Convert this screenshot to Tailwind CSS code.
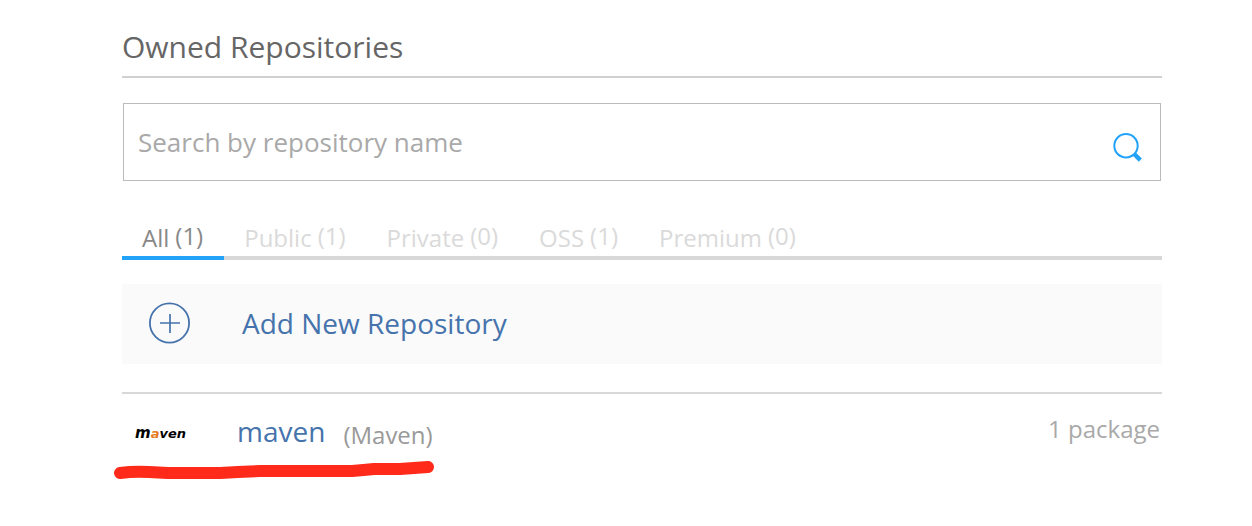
<!DOCTYPE html>
<html lang="en">
<head>
<meta charset="utf-8">
<meta name="viewport" content="width=device-width, initial-scale=1">
<title>Owned Repositories</title>
<script src="https://cdn.jsdelivr.net/npm/@tailwindcss/browser@4"></script>
</head>
<body class="bg-white font-['Open_Sans',sans-serif]">
<main class="pt-[26px] pr-[90px] pb-8 pl-[122px]">
  <h1 class="border-b-2 border-[#d0d0d0] pb-2 text-[30px] leading-[42px] text-[#666]">Owned Repositories</h1>

  <form class="relative mx-px mt-[25px]" role="search">
    <input type="text" aria-label="Search by repository name" placeholder="Search by repository name" class="block h-[78px] w-full border border-[#bbb] bg-white pr-16 pl-[14px] text-[26px] text-[#666] outline-none placeholder:text-[#a9a9a9]">
    <button type="button" aria-label="Search" class="absolute top-7 right-[18px] size-8">
      <svg viewBox="0 0 32 32" class="size-8" fill="none" stroke="#22a2f8">
        <circle cx="15" cy="14.8" r="11.7" stroke-width="2"/>
        <path d="M23 22.8l6.3 6.3" stroke-width="4.4"/>
      </svg>
    </button>
  </form>

  <nav class="mt-9 flex border-b-4 border-[#d8d8d8] text-2xl leading-9 text-[#dadada]">
    <a href="#all" class="-mb-1 flex gap-[6px] border-b-4 border-[#22a2f8] pr-[21px] pl-5 text-[#888]"><span class="pt-[3px]">All</span><span class="pt-px">(1)</span></a>
    <a href="#public" class="-mb-1 flex gap-[6px] pr-[21px] pl-5"><span class="pt-[3px]">Public</span><span class="pt-px">(1)</span></a>
    <a href="#private" class="-mb-1 flex gap-[6px] pr-[21px] pl-5"><span class="pt-[3px]">Private</span><span class="pt-px">(0)</span></a>
    <a href="#oss" class="-mb-1 flex gap-[6px] pr-[21px] pl-5"><span class="pt-[3px]">OSS</span><span class="pt-px">(1)</span></a>
    <a href="#premium" class="-mb-1 flex gap-[6px] pr-[21px] pl-5"><span class="pt-[3px]">Premium</span><span class="pt-px">(0)</span></a>
  </nav>

  <a href="#new" class="mt-6 flex h-20 items-center bg-[#fafafa] pl-[26px] text-[28px] text-[#4673ac]">
    <svg viewBox="0 0 44 44" class="mr-[50px] size-11" fill="none" stroke="currentColor" aria-hidden="true">
      <circle cx="21.5" cy="21" r="19.6" stroke-width="1.8"/>
      <path d="M12 21h20M22 12v19" stroke-width="1.7"/>
    </svg>
    <span class="pb-[2px]">Add New Repository</span>
  </a>

  <section class="relative mt-7 flex items-center border-t-2 border-[#d8d8d8] pt-4">
    <div class="w-[115px] pt-[2px] pl-[13px] font-['DejaVu_Sans',sans-serif] text-[13px] leading-[42px] font-bold text-black italic" role="img" aria-label="Maven logo">
      <span class="text-[15px]">m</span><span class="text-[#e57b1e]">a</span><span>ven</span>
    </div>
    <a href="#maven" class="pb-1 text-[28px] leading-10 text-[#4673ac]">maven</a>
    <span class="ml-[18px] pt-1 text-2xl leading-10 text-[#999]">(Maven)</span>
    <span class="ml-auto pr-[2px] pb-2 text-2xl leading-9 text-[#a9a9a9]">1 package</span>
    <svg viewBox="0 0 324 24" class="absolute top-16 -left-2 h-6 w-[324px]" fill="none" stroke="#ff2a1a" stroke-width="12" stroke-linecap="round" stroke-linejoin="round" aria-hidden="true">
      <path d="M6 15Q20 13 35 14L54 15L106 15L124 14L146 13L238 13Q250 12 260 11L286 11L314 9"/>
    </svg>
  </section>
</main>
</body>
</html>
